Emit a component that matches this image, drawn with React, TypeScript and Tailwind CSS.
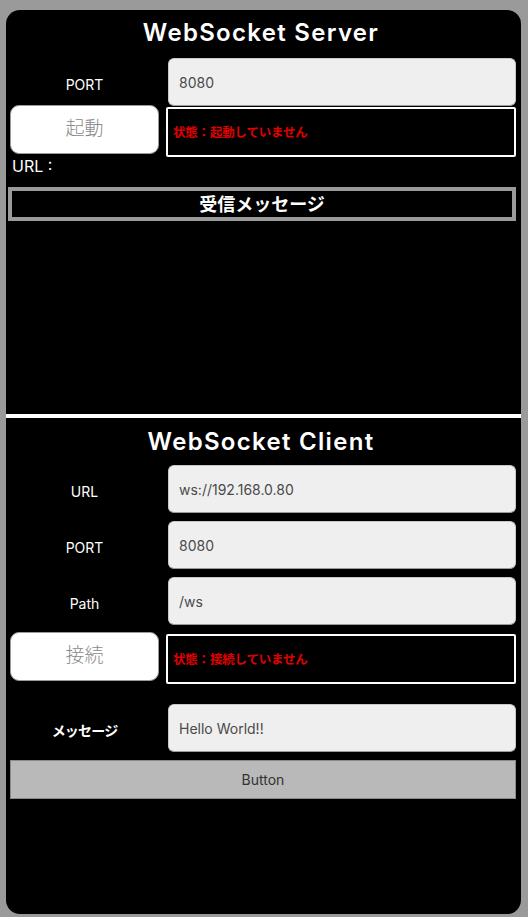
import React from "react";

const sans = "font-['Inter','Noto_Sans_CJK_JP',sans-serif]";

function Input({ value }: { value: string }) {
  return (
    <div className="h-[48px] rounded-[6px] bg-[#efefef] border border-[#c8c8c8] border-b-[#9a9a9a] flex items-center pl-[10px] text-[14px] text-[#4a4a4a]">
      {value}
    </div>
  );
}

function Label({ text, className = "" }: { text: string; className?: string }) {
  return (
    <div className={`flex items-center justify-center pt-[5px] text-white text-[14px] ${className}`}>{text}</div>
  );
}

function ActionRow({ btn, status }: { btn: string; status: string }) {
  return (
    <div className="grid grid-cols-[149px_1fr] gap-[7px]">
      <div className="h-[49px] rounded-[9px] bg-white border border-[#9a9a9a] flex items-center justify-center text-[19px] font-light text-[#8a8a8a]">
        {btn}
      </div>
      <div className="mt-[2px] h-[50px] border-2 border-white rounded-[2px] flex items-center pl-[5px] pt-[2px] text-[12.5px] font-semibold tracking-[-0.2px] text-[#e00000]">
        {status}
      </div>
    </div>
  );
}

export default function App() {
  return (
    <div className={`w-[528px] h-[917px] bg-[#9a9a9a] pt-[10px] pl-[6px] ${sans}`}>
      <div className="w-[515px] h-[904px] bg-black rounded-[14px] flex flex-col pr-[5px]">
        {/* Server */}
        <div className="mt-[7px] h-[32px] text-center text-white text-[24px] font-semibold tracking-[1.3px] leading-[32px]">
          WebSocket Server
        </div>
        <div className="pl-[4px] mt-[9px] flex flex-col">
          <div className="grid grid-cols-[149px_1fr] gap-[9px]">
            <Label text="PORT" />
            <Input value="8080" />
          </div>
          <div className="-mt-[1px]">
            <ActionRow btn="起動" status="状態：起動していません" />
          </div>
          <div className="text-white text-[16px] leading-[20px] pl-[2px] -mt-[1px]">URL :</div>
        </div>
        <div className="ml-[2px] mt-[11px] h-[34px] border-4 border-[#9a9a9a] flex items-center justify-center text-white text-[18px] font-bold">
          受信メッセージ
        </div>
        <div className="h-[193px]" />
        <div className="h-[4px] bg-white -mr-[5px]" />
        {/* Client */}
        <div className="mt-[8px] h-[32px] text-center text-white text-[24px] font-semibold tracking-[1.3px] leading-[32px]">
          WebSocket Client
        </div>
        <div className="pl-[4px] mt-[7px] flex flex-col gap-[8px]">
          <div className="grid grid-cols-[149px_1fr] gap-[9px]">
            <Label text="URL" />
            <Input value="ws://192.168.0.80" />
          </div>
          <div className="grid grid-cols-[149px_1fr] gap-[9px]">
            <Label text="PORT" />
            <Input value="8080" />
          </div>
          <div className="grid grid-cols-[149px_1fr] gap-[9px]">
            <Label text="Path" />
            <Input value="/ws" />
          </div>
          <div className="-mt-[1px]">
            <ActionRow btn="接続" status="状態：接続していません" />
          </div>
          <div className="grid grid-cols-[149px_1fr] gap-[9px] mt-[12px]">
            <Label text="メッセージ" className="text-[10.5px] font-bold tracking-[-0.8px]" />
            <Input value="Hello World!!" />
          </div>
          <div className="h-[39px] bg-[#b9b9b9] border border-[#8a8a8a] flex items-center justify-center text-[14px] text-[#333]">
            Button
          </div>
        </div>
      </div>
    </div>
  );
}
